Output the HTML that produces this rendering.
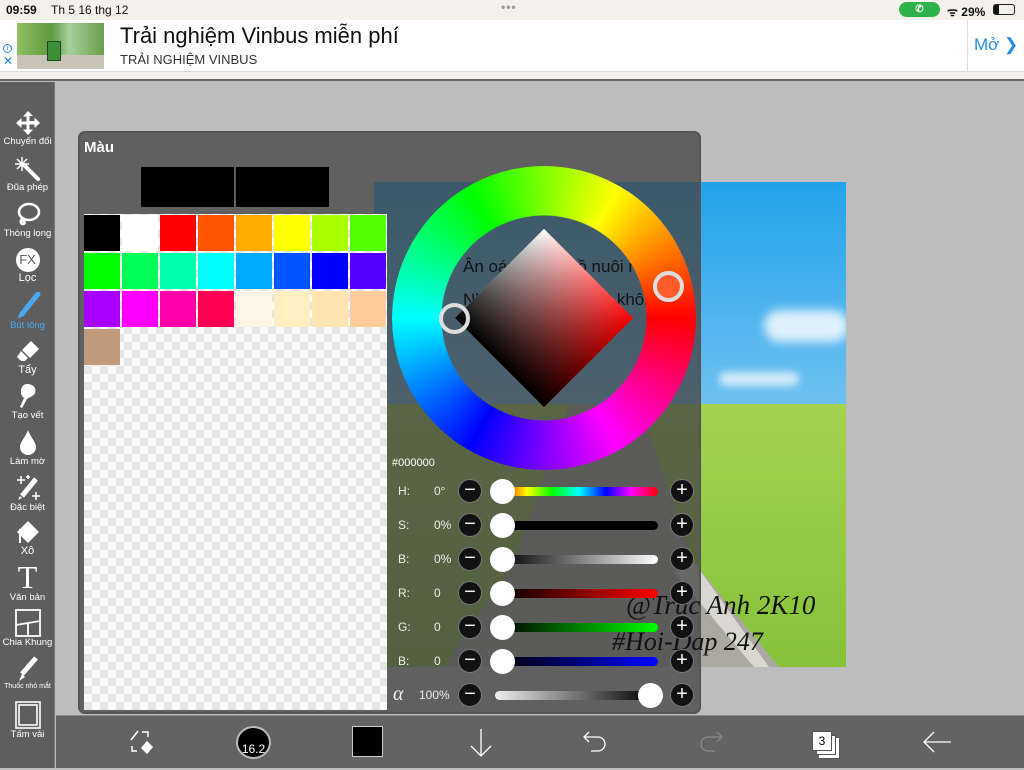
<!DOCTYPE html>
<html><head><meta charset="utf-8"><style>
*{margin:0;padding:0;box-sizing:border-box}
body{width:1024px;height:768px;overflow:hidden;position:relative;background:#bdbdbd;font-family:"Liberation Sans","Noto Sans CJK SC",sans-serif}
.abs{position:absolute}
#status{left:0;top:0;width:1024px;height:20px;background:#f3f1ea;font-size:12px;font-weight:bold;color:#111}
#ad{left:0;top:20px;width:1024px;height:52px;background:#fff;border-bottom:1px solid #ddd}
#strip{left:0;top:72px;width:1024px;height:9px;background:#f3f1ea;border-bottom:2px solid #666}
#tb{left:0;top:82px;width:55px;height:686px;background:#5e5e5e;border-right:1px solid #777}
.tl{position:absolute;left:0;width:55px;text-align:center;color:#fff;font-size:9.5px}
.tl svg{display:block;margin:0 auto}
#bb{left:56px;top:715px;width:968px;height:53px;background:#636363;border-top:1px solid #8a8a8a}
#img{left:374px;top:182px;width:472px;height:485px;overflow:hidden;background:linear-gradient(#22a2ec,#6cc0f0 45%,#b8def5 72%)}
#panel{left:78px;top:131px;width:623px;height:583px;background:rgba(68,68,68,.77);border-radius:7px;border:2px solid #555}
#pal{left:84px;top:214px;width:303px;height:496px;background-color:#fafafa;background-image:conic-gradient(#e6e6e6 25%,#fafafa 0 50%,#e6e6e6 0 75%,#fafafa 0);background-size:16px 16px}
.c{position:absolute;width:36px;height:36px}
.lab{position:absolute;color:#eee;font-size:12px}
.btn{position:absolute;width:24px;height:24px;border-radius:50%;background:#111;border:1px solid #777;color:#fff;text-align:center;line-height:21px;font-size:20px}
.trk{position:absolute;height:9px;border-radius:5px;left:500px;width:158px}
.knob{position:absolute;width:25px;height:25px;border-radius:50%;background:#fff}
</style></head><body>

<div id="status" class="abs">
 <span class="abs" style="left:6px;top:3px">09:59</span>
 <span class="abs" style="left:51px;top:3px;font-weight:normal">Th 5 16 thg 12</span>
 <span class="abs" style="left:501px;top:0px;color:#999;letter-spacing:1px">•••</span>
 <div class="abs" style="left:899px;top:2px;width:41px;height:15px;background:#2fb24c;border-radius:8px;color:#fff;text-align:center;font-size:10px;line-height:15px">✆</div>
 <span class="abs" style="left:947px;top:3px">ᯤ 29%</span>
 <div class="abs" style="left:993px;top:4px;width:22px;height:11px;border:1.5px solid #222;border-radius:3px"><div style="width:5px;height:100%;background:#111"></div></div>
</div>

<div id="ad" class="abs">
 <div class="abs" style="left:3px;top:24px;width:9px;height:9px;border:1px solid #2a8ae0;border-radius:50%;font-size:7px;color:#2a8ae0;text-align:center;line-height:8px">i</div>
 <div class="abs" style="left:3px;top:34px;color:#2a8ae0;font-size:12px">✕</div>
 <div class="abs" style="left:17px;top:3px;width:87px;height:46px;background:linear-gradient(90deg,#8fbf60,#5e9a40 40%,#a9cfa0 60%,#6a9e48);"><div style="position:absolute;left:0;top:32px;width:87px;height:14px;background:#c8c4b8"></div><div style="position:absolute;left:30px;top:18px;width:14px;height:20px;background:#3f8f3a;border:1px solid #1f4a1a"></div></div>
 <div class="abs" style="left:120px;top:3px;font-size:22px;color:#111">Trải nghiệm Vinbus miễn phí</div>
 <div class="abs" style="left:120px;top:32px;font-size:13px;color:#333">TRẢI NGHIỆM VINBUS</div>
 <div class="abs" style="left:967px;top:0;width:57px;height:52px;border-left:1px solid #ddd;color:#2a8ae0;font-size:17px;padding:15px 0 0 6px">Mở ❯</div>
</div>
<div id="strip" class="abs"></div>

<!-- image -->
<div id="img" class="abs">
 <div class="abs" style="left:390px;top:128px;width:85px;height:32px;background:#eef7fd;border-radius:16px;filter:blur(5px);opacity:.9"></div>
 <div class="abs" style="left:345px;top:190px;width:80px;height:14px;background:#eef7fd;border-radius:8px;filter:blur(4px);opacity:.8"></div>
 <div class="abs" style="left:0;top:222px;width:472px;height:263px;background:linear-gradient(#a5d24e,#86c23a)"></div>
 <svg class="abs" style="left:0;top:0" width="472" height="485"><polygon points="195,222 265,222 320,380 405,485 70,485 140,380" fill="#aaa89f"/><polygon points="320,380 395,485 380,485 300,390" fill="#d8d8d0"/></svg>
</div>

<div id="panel" class="abs"></div>
<svg class="abs" style="left:374px;top:182px" width="472" height="485">
 <text x="89" y="90" font-size="17" fill="#111" font-family="Liberation Sans,sans-serif">Ân oán  giang hồ nuôi  nhân</text>
 <text x="89" y="123" font-size="17" fill="#111" font-family="Liberation Sans,sans-serif">Nhân  tình  lục  dạ  ơn khôn</text>
 <text x="252" y="432" font-size="27" fill="#111" font-family="Liberation Serif,serif" font-style="italic">@Trúc  Anh 2K10</text>
 <text x="238" y="468" font-size="26" fill="#111" font-family="Liberation Serif,serif" font-style="italic">#Hoi-Dap 247</text>
</svg>
<div class="abs" style="left:84px;top:139px;color:#fff;font-weight:bold;font-size:15px">Màu</div>
<div class="abs" style="left:141px;top:167px;width:93px;height:40px;background:#000"></div>
<div class="abs" style="left:236px;top:167px;width:93px;height:40px;background:#000"></div>

<div id="pal" class="abs">
<div class="c" style="left:0;top:1px;background:#000"></div><div class="c" style="left:38px;top:1px;background:#fff"></div><div class="c" style="left:76px;top:1px;background:#f00"></div><div class="c" style="left:114px;top:1px;background:#ff5500"></div><div class="c" style="left:152px;top:1px;background:#ffaa00"></div><div class="c" style="left:190px;top:1px;background:#ff0"></div><div class="c" style="left:228px;top:1px;background:#aaff00"></div><div class="c" style="left:266px;top:1px;background:#55ff00"></div>
<div class="c" style="left:0;top:39px;background:#0f0"></div><div class="c" style="left:38px;top:39px;background:#00ff55"></div><div class="c" style="left:76px;top:39px;background:#00ffaa"></div><div class="c" style="left:114px;top:39px;background:#0ff"></div><div class="c" style="left:152px;top:39px;background:#00aaff"></div><div class="c" style="left:190px;top:39px;background:#0055ff"></div><div class="c" style="left:228px;top:39px;background:#00f"></div><div class="c" style="left:266px;top:39px;background:#5500ff"></div>
<div class="c" style="left:0;top:77px;background:#aa00ff"></div><div class="c" style="left:38px;top:77px;background:#f0f"></div><div class="c" style="left:76px;top:77px;background:#ff00aa"></div><div class="c" style="left:114px;top:77px;background:#ff0055"></div><div class="c" style="left:152px;top:77px;background:#fff5e6"></div><div class="c" style="left:190px;top:77px;background:#ffeec0"></div><div class="c" style="left:228px;top:77px;background:#ffe5b2"></div><div class="c" style="left:266px;top:77px;background:#ffcc9c"></div>
<div class="c" style="left:0;top:115px;background:#c09a7c"></div>
</div>

<!-- wheel -->
<div class="abs" style="left:392px;top:166px;width:304px;height:304px;border-radius:50%;background:conic-gradient(from 90deg,#f00,#f0f 60deg,#00f 120deg,#0ff 180deg,#0f0 240deg,#ff0 300deg,#f00 360deg);-webkit-mask:radial-gradient(circle,transparent 102px,#000 103px);mask:radial-gradient(circle,transparent 102px,#000 103px)"></div>
<div class="abs" style="left:481px;top:255px;width:126px;height:126px;transform:rotate(45deg);background:linear-gradient(to bottom,rgba(0,0,0,0),#000),linear-gradient(to right,#fff,#f00)"></div>
<div class="abs" style="left:653px;top:271px;width:31px;height:31px;border-radius:50%;background:#ff5a2a;border:4px solid #ddd"></div>
<div class="abs" style="left:439px;top:303px;width:31px;height:31px;border-radius:50%;border:4px solid #ddd"></div>

<div class="lab" style="left:392px;top:457px;color:#fff;font-size:11px">#000000</div>
<div class="lab" style="left:398px;top:484px">H:</div><div class="lab" style="left:434px;top:484px">0°</div>
<div class="lab" style="left:398px;top:518px">S:</div><div class="lab" style="left:434px;top:518px">0%</div>
<div class="lab" style="left:398px;top:552px">B:</div><div class="lab" style="left:434px;top:552px">0%</div>
<div class="lab" style="left:398px;top:586px">R:</div><div class="lab" style="left:434px;top:586px">0</div>
<div class="lab" style="left:398px;top:620px">G:</div><div class="lab" style="left:434px;top:620px">0</div>
<div class="lab" style="left:398px;top:654px">B:</div><div class="lab" style="left:434px;top:654px">0</div>
<div class="lab" style="left:393px;top:683px;font-size:20px;font-style:italic;font-family:'Liberation Serif',serif">α</div><div class="lab" style="left:419px;top:688px">100%</div>

<div class="trk" style="top:487px;background:linear-gradient(to right,#f00,#ff0 17%,#0f0 33%,#0ff 50%,#00f 67%,#f0f 83%,#f00)"></div>
<div class="trk" style="top:521px;background:#000"></div>
<div class="trk" style="top:555px;background:linear-gradient(to right,#000,#fff)"></div>
<div class="trk" style="top:589px;background:linear-gradient(to right,#000,#f00)"></div>
<div class="trk" style="top:623px;background:linear-gradient(to right,#000,#0f0)"></div>
<div class="trk" style="top:657px;background:linear-gradient(to right,#000,#00f)"></div>
<div class="trk" style="top:691px;left:495px;width:158px;background:linear-gradient(to right,#eee,#000)"></div>

<div class="knob" style="left:490px;top:479px"></div><div class="knob" style="left:490px;top:513px"></div><div class="knob" style="left:490px;top:547px"></div><div class="knob" style="left:490px;top:581px"></div><div class="knob" style="left:490px;top:615px"></div><div class="knob" style="left:490px;top:649px"></div><div class="knob" style="left:638px;top:683px"></div>

<div class="btn" style="left:458px;top:479px">−</div><div class="btn" style="left:458px;top:513px">−</div><div class="btn" style="left:458px;top:547px">−</div><div class="btn" style="left:458px;top:581px">−</div><div class="btn" style="left:458px;top:615px">−</div><div class="btn" style="left:458px;top:649px">−</div><div class="btn" style="left:458px;top:683px">−</div>
<div class="btn" style="left:670px;top:479px">+</div><div class="btn" style="left:670px;top:513px">+</div><div class="btn" style="left:670px;top:547px">+</div><div class="btn" style="left:670px;top:581px">+</div><div class="btn" style="left:670px;top:615px">+</div><div class="btn" style="left:670px;top:649px">+</div><div class="btn" style="left:670px;top:683px">+</div>

<!-- left toolbar -->
<div id="tb" class="abs">
 <div class="tl" style="top:28px"><svg width="26" height="26" viewBox="0 0 26 26" fill="#fff"><path d="M13 1l5 5h-3.5v5h5V7.5L25 13l-5.5 5v-3.5h-5v5H18L13 25l-5-5.5h3.5v-5h-5V18L1 13l5.5-5v3.5h5v-5H8z"/></svg>Chuyển đổi</div>
 <div class="tl" style="top:74px"><svg width="26" height="26" viewBox="0 0 26 26"><path d="M9 9l14 14" stroke="#fff" stroke-width="4" stroke-linecap="round"/><path d="M7 1v14M0 8h14M2 3l10 10M12 3L2 13" stroke="#fff" stroke-width="1.5"/></svg>Đũa phép</div>
 <div class="tl" style="top:120px"><svg width="26" height="26" viewBox="0 0 26 26" fill="none" stroke="#fff" stroke-width="2.5"><ellipse cx="14" cy="10" rx="10" ry="8"/><path d="M8 16c-3 2-3 6 0 6s2-4-3-3"/></svg>Thòng lọng</div>
 <div class="tl" style="top:166px;font-size:11px"><div style="width:24px;height:24px;margin:0 auto;border-radius:50%;background:#fff;color:#5e5e5e;font-size:13px;line-height:24px">FX</div>Lọc</div>
 <div class="tl" style="top:210px;color:#4aa8f0"><svg width="26" height="28" viewBox="0 0 26 28"><path d="M23 2L10 18" stroke="#4aa8f0" stroke-width="5" stroke-linecap="round"/><path d="M8 18c-3 1-4 4-5 8 4-1 7-2 8-5z" fill="#4aa8f0"/></svg>Bút lông</div>
 <div class="tl" style="top:256px;font-size:11px"><svg width="26" height="26" viewBox="0 0 26 26" fill="#fff"><path d="M16 3l8 8-9 9-8-8z"/><path d="M6 13l7 7-3 3H6l-4-4z"/></svg>Tẩy</div>
 <div class="tl" style="top:300px"><svg width="26" height="28" viewBox="0 0 26 28" fill="#fff"><path d="M12 2c6 0 10 4 8 9-2 4-6 4-8 6l-5 9-2-1 4-9C4 13 5 2 12 2z"/></svg>Tạo vết</div>
 <div class="tl" style="top:346px"><svg width="26" height="28" viewBox="0 0 26 28" fill="#fff"><path d="M13 2C10 10 5 14 5 19a8 8 0 0016 0c0-5-5-9-8-17z"/></svg>Làm mờ</div>
 <div class="tl" style="top:392px"><svg width="28" height="28" viewBox="0 0 28 28"><path d="M22 5L8 22" stroke="#fff" stroke-width="5"/><path d="M6 22l-2 4 4-2z" fill="#fff"/><path d="M7 2v8M3 6h8M22 18v8M18 22h8M14 1v4M12 3h4" stroke="#fff" stroke-width="1.5"/></svg>Đặc biệt</div>
 <div class="tl" style="top:437px;font-size:11px"><svg width="28" height="26" viewBox="0 0 28 26"><path d="M14 2l11 11-11 11L3 13z" fill="#fff"/><path d="M6 10v14" stroke="#fff" stroke-width="2"/></svg>Xô</div>
 <div class="tl" style="top:480px"><div style="font-family:'Liberation Serif',serif;font-size:32px;line-height:30px">T</div>Văn bản</div>
 <div class="tl" style="top:527px"><svg width="26" height="28" viewBox="0 0 26 28" fill="none" stroke="#fff" stroke-width="1.8"><rect x="1" y="1" width="24" height="26"/><path d="M1 16l24-4M13 14v13"/></svg>Chia Khung</div>
 <div class="tl" style="top:573px;font-size:7px"><svg width="26" height="28" viewBox="0 0 26 28"><path d="M21 3l-14 16" stroke="#fff" stroke-width="5"/><path d="M7 19l-3 7 6-4z" fill="#fff"/></svg>Thuốc nhỏ mắt</div>
 <div class="tl" style="top:619px"><svg width="26" height="28" viewBox="0 0 26 28" fill="none" stroke="#fff" stroke-width="1.6"><rect x="1" y="1" width="24" height="26"/><rect x="4" y="4" width="18" height="20"/></svg>Tấm vải</div>
</div>

<!-- bottom bar -->
<div id="bb" class="abs">
 <svg class="abs" style="left:72px;top:12px" width="26" height="28" viewBox="0 0 26 28" fill="none" stroke="#fff" stroke-width="1.5"><path d="M3 12l7-9M14 4h6v5M4 18v5h5"/><path d="M19 14l5 5-5 6-5-5z" fill="#fff"/></svg>
 <div class="abs" style="left:180px;top:10px;width:35px;height:33px;border-radius:50%;background:#000;border:2px solid #bbb;color:#fff;font-size:12px;text-align:center;line-height:42px">16.2</div>
 <div class="abs" style="left:296px;top:10px;width:31px;height:31px;background:#000;border:1px solid #ccc"></div>
 <svg class="abs" style="left:413px;top:12px" width="24" height="30" viewBox="0 0 24 30" fill="none" stroke="#fff" stroke-width="1.3"><path d="M12 1v27M2 18l10 10 10-10"/></svg>
 <svg class="abs" style="left:527px;top:14px" width="26" height="24" viewBox="0 0 26 24" fill="none" stroke="#fff" stroke-width="1.3"><path d="M6 2L1 7l5 5M1 7h14a7 7 0 010 14H8"/></svg>
 <svg class="abs" style="left:641px;top:14px" width="26" height="24" viewBox="0 0 26 24" fill="none" stroke="#8a8a8a" stroke-width="1.3"><path d="M20 2l5 5-5 5M25 7H11a7 7 0 000 14h7"/></svg>
 <div class="abs" style="left:760px;top:19px;width:20px;height:20px;background:#fff;border:1px solid #555;box-shadow:3px 3px 0 #fff,4px 4px 0 #555"></div>
 <div class="abs" style="left:756px;top:15px;width:20px;height:20px;background:#fff;border:1px solid #555;color:#000;font-size:12px;text-align:center;line-height:18px">3</div>
 <svg class="abs" style="left:866px;top:14px" width="30" height="24" viewBox="0 0 30 24" fill="none" stroke="#fff" stroke-width="1.3"><path d="M12 2L2 12l10 10M2 12h27"/></svg>
</div>
</body></html>
